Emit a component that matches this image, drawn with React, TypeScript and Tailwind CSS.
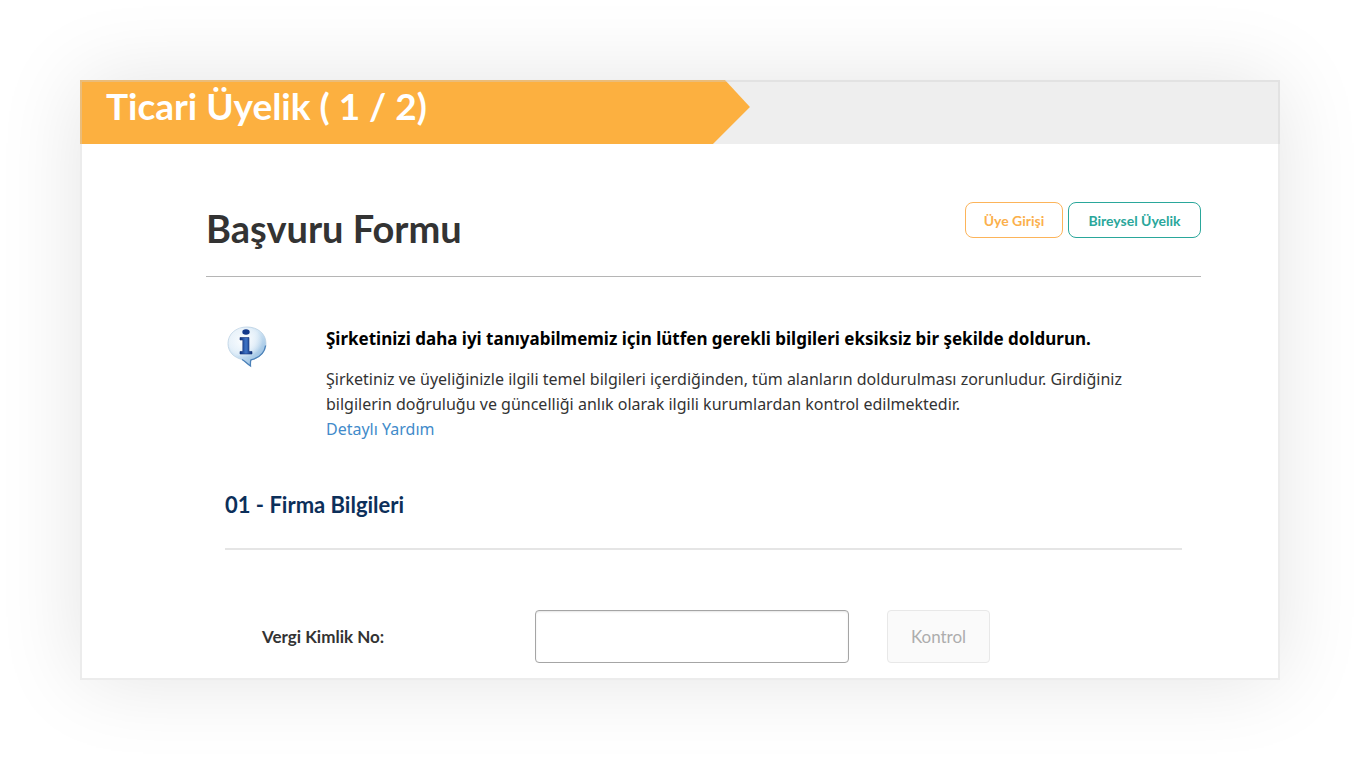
function InfoBalloon() {
  return (
    <svg className="h-[42px] w-[42px]" viewBox="0 0 42 42" aria-hidden="true">
      <defs>
        <linearGradient id="balloon" x1="0" y1="0" x2="1" y2="1">
          <stop offset="0" stopColor="#e4eef7" />
          <stop offset="0.45" stopColor="#d6e8f6" />
          <stop offset="0.75" stopColor="#a5c8e6" />
          <stop offset="1" stopColor="#4f86bd" />
        </linearGradient>
        <radialGradient id="gloss" cx="0.45" cy="0.45" r="0.55">
          <stop offset="0" stopColor="#ffffff" />
          <stop offset="0.6" stopColor="#f2f8fd" stopOpacity="0.7" />
          <stop offset="1" stopColor="#ffffff" stopOpacity="0" />
        </radialGradient>
        <linearGradient id="letter" x1="0" y1="0" x2="1" y2="0">
          <stop offset="0" stopColor="#0b2f7c" />
          <stop offset="0.5" stopColor="#3f74c6" />
          <stop offset="1" stopColor="#0d2c72" />
        </linearGradient>
      </defs>
      <path
        d="M22 1C11 1 3 8 3 17.500C3 26 9 31.500 17 33.500C19.500 34.500 21.500 37.500 25.500 40C25.300 37.500 25.300 35.500 26 33.800C35 32 41 26 41 17.500C41 8 33 1 22 1Z"
        fill="url(#balloon)"
        stroke="#b9cfe2"
        strokeWidth="0.8"
      />
      <ellipse cx="20.500" cy="16.500" rx="17" ry="15" fill="url(#gloss)" />
      <path
        d="M40.600 19.500C39.500 27 34 32 26 33.800C25.300 35.500 25.300 37.500 25.500 40C21.500 37.500 19.500 34.500 17 33.500"
        fill="none"
        stroke="#4a80b8"
        strokeWidth="1.300"
      />
      <ellipse cx="21" cy="6" rx="3.700" ry="2.800" fill="#12388a" />
      <path
        d="M15 11.500H24V25.500H27V28H15V25.500H17.800V14H15Z"
        fill="url(#letter)"
        stroke="#102f78"
        strokeWidth="0.6"
      />
    </svg>
  );
}

export default function App() {
  return (
    <div className="min-h-screen bg-white p-20 font-['Lato','Noto_Sans',sans-serif] text-[#333333] [font-variant-ligatures:none]">
      <main className="relative bg-white shadow-[0_0_80px_rgba(0,0,0,0.11)]">
        <header className="h-16 bg-[#eeeeee]">
          <div className="h-full w-[55.83%] bg-[#fcb040] pl-[26px] [clip-path:polygon(0_0,calc(100%-25px)_0,100%_27px,calc(100%-37px)_100%,0_100%)]">
            <p className="text-[37px] leading-[52px] font-bold whitespace-nowrap text-white">
              Ticari Üyelik ( 1 / 2)
            </p>
          </div>
        </header>

        <div className="pt-[58px] pr-[79px] pb-[17px] pl-[126px]">
          <div className="flex items-start justify-between border-b border-[#b5b5b5] pb-[22px]">
            <h1 className="text-[38px] leading-[52px] font-bold">
              Başvuru Formu
            </h1>
            <nav className="flex gap-[5px] text-[14px] font-bold">
              <a
                href="#giris"
                className="flex h-9 w-[98px] items-center justify-center rounded-lg border border-[#fcb45a] text-[#fbb04c]"
              >
                Üye Girişi
              </a>
              <a
                href="#bireysel"
                className="flex h-9 w-[133px] items-center justify-center rounded-lg border border-[#2aa79b] text-[#2aa79b]"
              >
                Bireysel Üyelik
              </a>
            </nav>
          </div>

          <div className="px-[19px]">
            <section className="flex pt-[49px]">
              <div className="w-[101px] shrink-0">
                <InfoBalloon />
              </div>
              <div className="max-w-[840px] font-['Noto_Sans',sans-serif] text-[16px] leading-[25px]">
                <h2 className="mb-[15px] text-[17px] leading-[26px] font-bold text-black">
                  Şirketinizi daha iyi tanıyabilmemiz için lütfen gerekli
                  bilgileri eksiksiz bir şekilde doldurun.
                </h2>
                <p>
                  Şirketiniz ve üyeliğinizle ilgili temel bilgileri
                  içerdiğinden, tüm alanların doldurulması zorunludur.
                  Girdiğiniz bilgilerin doğruluğu ve güncelliği anlık olarak
                  ilgili kurumlardan kontrol edilmektedir.
                </p>
                <a href="#yardim" className="text-[#428bca]">
                  Detaylı Yardım
                </a>
              </div>
            </section>

            <form>
              <h2 className="mt-[48px] border-b-2 border-[#e5e5e5] pb-[28px] text-[22px] leading-[30px] font-bold text-[#0c2f5a]">
                01 - Firma Bilgileri
              </h2>
              <div className="flex items-center pt-[60px] pl-[37px] text-[17px]">
                <label htmlFor="vergi" className="w-[273px] font-bold">
                  Vergi Kimlik No:
                </label>
                <input
                  id="vergi"
                  type="text"
                  className="h-[53px] w-[314px] rounded border border-[#a5a5a5] px-3 shadow-[inset_0_1px_2px_rgba(0,0,0,0.1)]"
                />
                <button
                  type="button"
                  disabled
                  className="ml-[38px] h-[53px] w-[103px] rounded border border-[#e8e8e8] bg-[#fafafa] text-[#adadad]"
                >
                  Kontrol
                </button>
              </div>
            </form>
          </div>
        </div>
        <div className="pointer-events-none absolute inset-0 border-2 border-[#d0d0d0]/40" />
      </main>
    </div>
  );
}
